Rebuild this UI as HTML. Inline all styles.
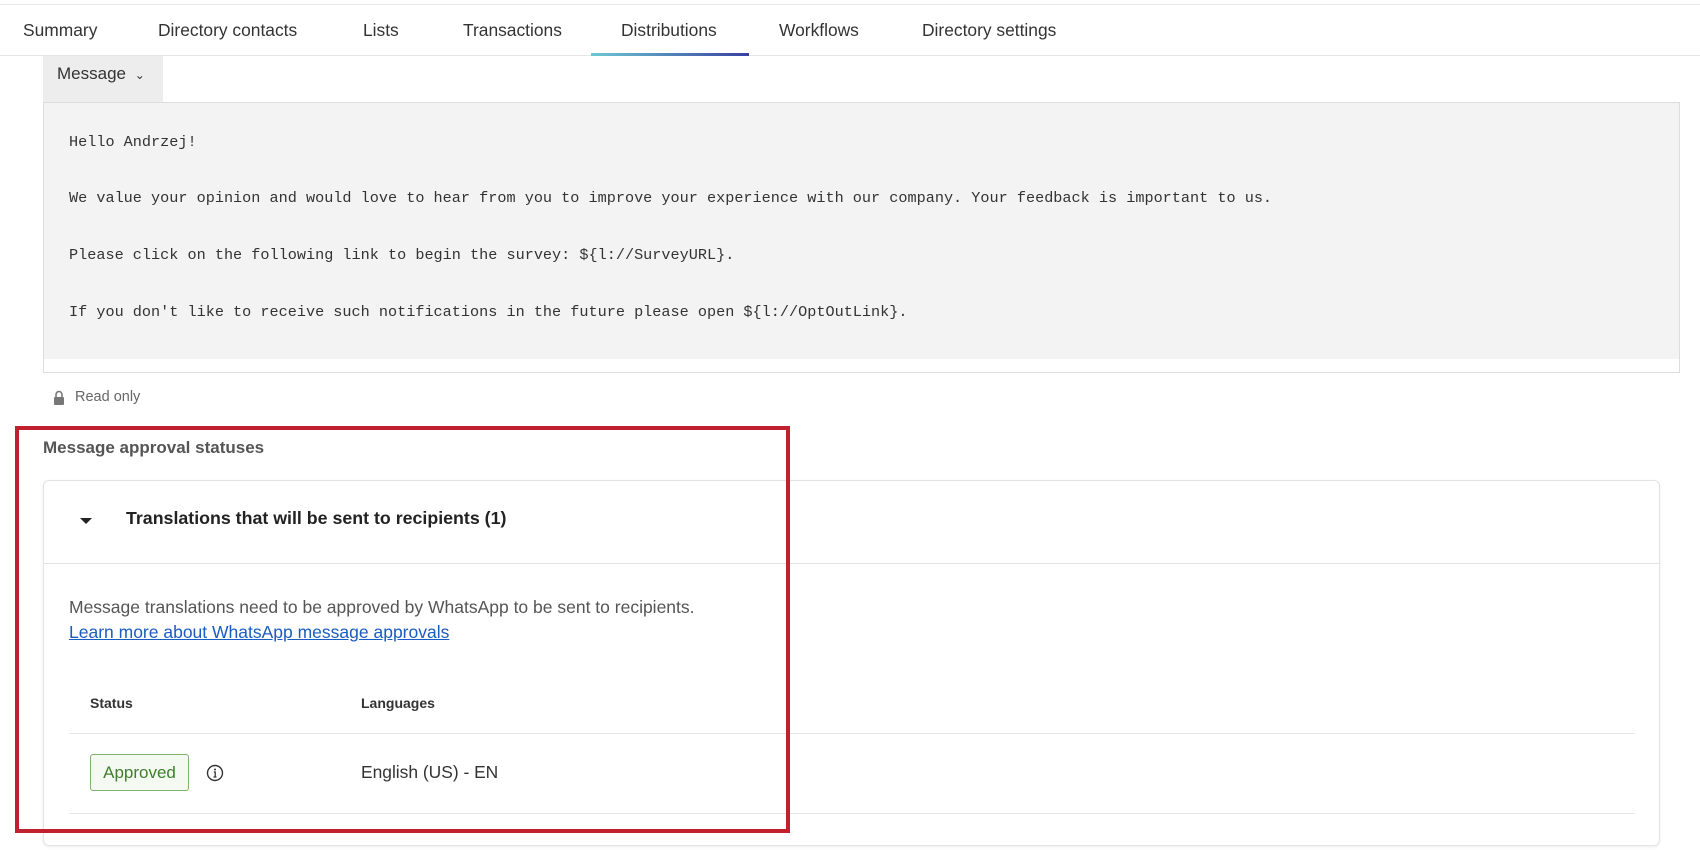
<!DOCTYPE html>
<html><head><meta charset="utf-8"><style>
*{margin:0;padding:0;box-sizing:border-box}
body{width:1700px;height:850px;background:#fff;font-family:"Liberation Sans",sans-serif;position:relative;overflow:hidden;color:#222}
.a{position:absolute;white-space:nowrap}
.tab{position:absolute;top:20px;font-size:17.4px;color:#333}
.mono{position:absolute;left:69px;font-family:"Liberation Mono",monospace;font-size:15.2px;color:#333;white-space:nowrap}
</style></head><body>
<div class="a" style="left:0;top:4px;width:1700px;height:1px;background:#e8e8e8"></div>
<div class="a" style="left:0;top:55px;width:1700px;height:1px;background:#e6e6e6"></div>
<div class="tab" style="left:23px">Summary</div>
<div class="tab" style="left:158px">Directory contacts</div>
<div class="tab" style="left:363px">Lists</div>
<div class="tab" style="left:463px">Transactions</div>
<div class="tab" style="left:621px">Distributions</div>
<div class="tab" style="left:779px">Workflows</div>
<div class="tab" style="left:922px">Directory settings</div>
<div class="a" style="left:591px;top:53px;width:158px;height:3px;background:linear-gradient(90deg,#6cc9d3,#3a3fa0)"></div>

<div class="a" style="left:43px;top:56px;width:120px;height:46px;background:#ededed"></div>
<div class="a" style="left:57px;top:64px;font-size:17px;color:#333">Message <span style="font-size:12px;margin-left:4px">&#8964;</span></div>
<div class="a" style="left:43px;top:102px;width:1637px;height:271px;border:1px solid #ddd;border-top:none;background:#fff"></div>
<div class="a" style="left:44px;top:102px;width:1635px;height:257px;background:#f3f3f3;border-top:1px solid #ddd"></div>
<div class="mono" style="top:133px">Hello Andrzej!</div>
<div class="mono" style="top:189px">We value your opinion and would love to hear from you to improve your experience with our company. Your feedback is important to us.</div>
<div class="mono" style="top:246px">Please click on the following link to begin the survey: ${l://SurveyURL}.</div>
<div class="mono" style="top:303px">If you don't like to receive such notifications in the future please open ${l://OptOutLink}.</div>

<svg class="a" style="left:53px;top:390px" width="12" height="15" viewBox="0 0 12 15"><path d="M3 7V4.5a3 3 0 0 1 6 0V7" fill="none" stroke="#777" stroke-width="1.6"/><rect x="1" y="7" width="10" height="8" rx="1" fill="#777"/></svg>
<div class="a" style="left:75px;top:389px;font-size:14.5px;color:#666">Read only</div>

<div class="a" style="left:43px;top:438px;font-size:17px;font-weight:bold;color:#555">Message approval statuses</div>
<div class="a" style="left:43px;top:480px;width:1617px;height:366px;border:1px solid #e3e3e3;border-radius:6px;box-shadow:0 1px 3px rgba(0,0,0,.08)"></div>
<div class="a" style="left:80px;top:518px;width:0;height:0;border-left:6px solid transparent;border-right:6px solid transparent;border-top:6px solid #222"></div>
<div class="a" style="left:126px;top:508px;font-size:17.8px;font-weight:bold;color:#222">Translations that will be sent to recipients (1)</div>
<div class="a" style="left:44px;top:563px;width:1615px;height:1px;background:#e3e3e3"></div>
<div class="a" style="left:69px;top:597px;font-size:17.5px;color:#555">Message translations need to be approved by WhatsApp to be sent to recipients.</div>
<div class="a" style="left:69px;top:622px;font-size:17.5px;color:#1a5dc0;text-decoration:underline">Learn more about WhatsApp message approvals</div>
<div class="a" style="left:90px;top:695px;font-size:14px;font-weight:bold;color:#333">Status</div>
<div class="a" style="left:361px;top:695px;font-size:14px;font-weight:bold;color:#333">Languages</div>
<div class="a" style="left:69px;top:733px;width:1566px;height:1px;background:#e6e6e6"></div>
<div class="a" style="left:90px;top:754px;width:99px;height:37px;border:1.5px solid #7fb26c;border-radius:3px;background:#f4f9f1;color:#3f7e2c;font-size:17px;text-align:center;line-height:35px">Approved</div>
<svg class="a" style="left:206px;top:764px" width="18" height="18" viewBox="0 0 18 18"><circle cx="9" cy="9" r="7.5" fill="none" stroke="#333" stroke-width="1.4"/><circle cx="9" cy="5.5" r="1" fill="#333"/><path d="M7.8 8h1.4v5M7.5 13h3" fill="none" stroke="#333" stroke-width="1.3"/></svg>
<div class="a" style="left:361px;top:762px;font-size:17.4px;color:#333">English (US) - EN</div>
<div class="a" style="left:69px;top:813px;width:1566px;height:1px;background:#e6e6e6"></div>

<div class="a" style="left:15px;top:426px;width:775px;height:407px;border:4px solid #c1202f"></div>
</body></html>
